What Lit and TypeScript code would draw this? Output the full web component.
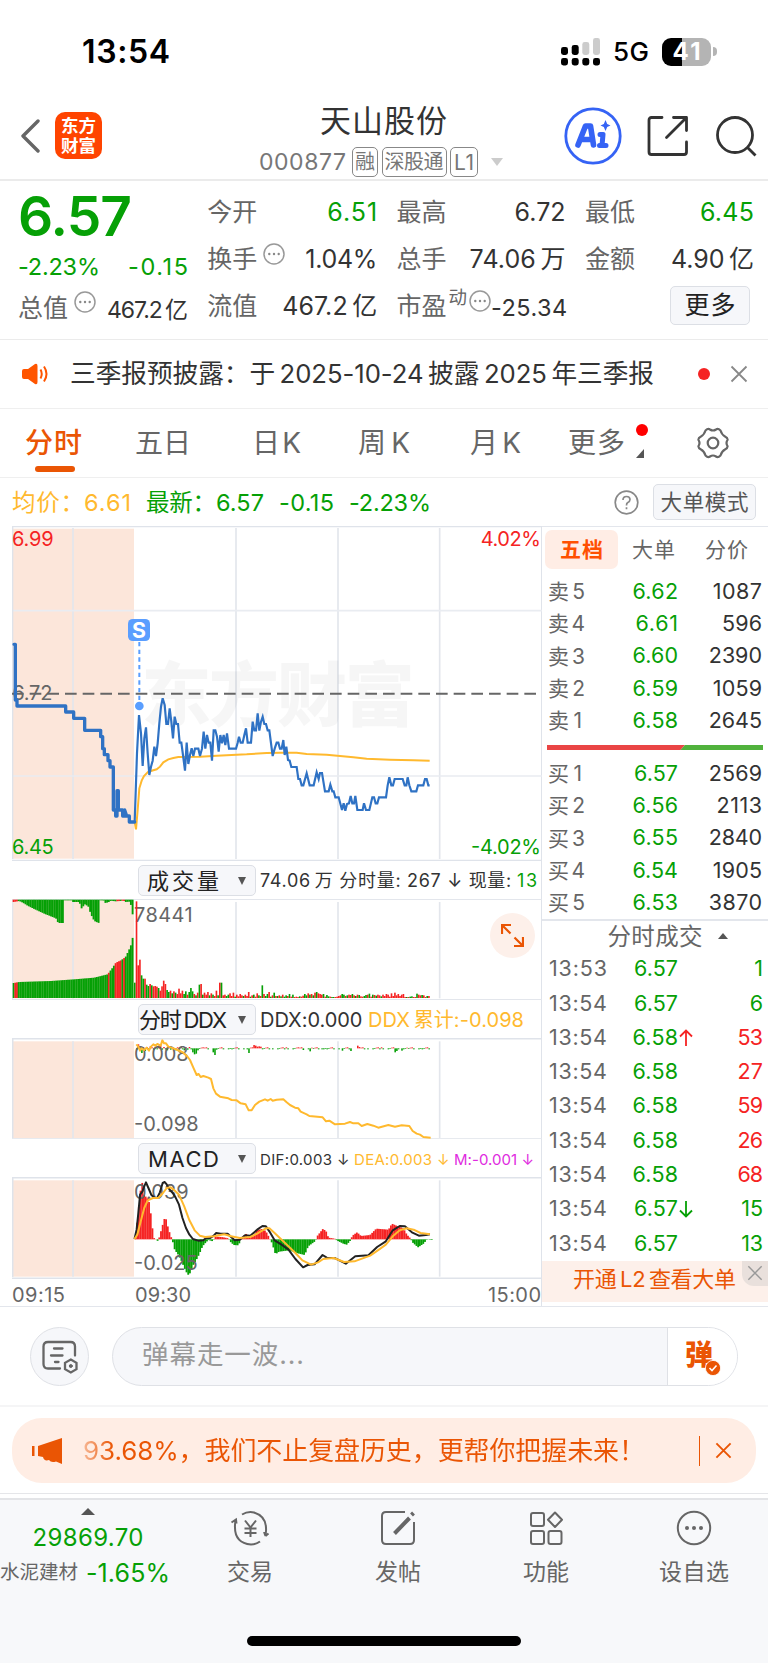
import { LitElement, html, svg, css } from "lit";
import { customElement, property } from "lit/decorators.js";

/** A single line of text whose tracking is adjusted so that it fills the given width. */
@customElement("fit-label")
class FitLabel extends LitElement {
  @property() text = "";
  @property({ type: Number }) w = 0;
  static styles = css`
    :host { display: inline-block; flex: none; white-space: pre; line-height: 1; }
    span { display: inline-block; }
  `;
  updated() {
    const s = this.renderRoot.querySelector("span") as HTMLElement;
    s.style.letterSpacing = "0px";
    const natural = s.getBoundingClientRect().width;
    const gaps = Math.max(1, [...this.text].length - 1);
    const ls = (this.w - natural) / gaps;
    s.style.letterSpacing = `${ls}px`;
    s.style.marginRight = `${-ls}px`;
  }
  render() { return html`<span>${this.text}</span>`; }
}

const t = (text: string, w: number, cls = "") =>
  html`<fit-label class=${cls} .text=${text} .w=${w}></fit-label>`;

const lerp = (pts: number[][], x: number) => {
  for (let i = 1; i < pts.length; i++) {
    if (x <= pts[i][0]) {
      const [x0, y0] = pts[i - 1], [x1, y1] = pts[i];
      return y0 + ((y1 - y0) * (x - x0)) / (x1 - x0 || 1);
    }
  }
  return pts[pts.length - 1][1];
};
const parse = (s: string) => s.trim().split(/\s+/).map((p) => p.split(",").map(Number));
const shift = (s: string, dx: number) => parse(s).map(([x, y]) => `${x + dx},${y}`).join(" ");
const stretch = (s: string) => parse(s).map(([x, y]) => `${(x * 3 / 2.877).toFixed(1)},${y}`).join(" ");

const PRE = "42,373 46,373 46,540 51,540 51,558 197,558 197,576 221,576 221,595 254,595 254,631 302,631 302,650 308,650 308,686 313,686 313,704 324,704 324,722 330,722 330,741 340,741 340,870 347,870 347,888 351,888 351,812 355,812 355,870 368,870 368,888 374,888 374,870 380,888 388,888 388,906 404,906";
const PRICE = "404,906 411,700 417,585 423,640 428,738 433,655 438,622 443,700 448,765 453,740 458,722 463,680 468,708 473,670 478,610 483,560 488,535 494,555 499,612 504,612 509,565 514,605 519,655 524,590 529,612 534,612 539,668 544,668 549,705 555,752 560,668 565,732 570,705 575,685 580,708 585,686 595,686 600,708 606,686 611,635 616,686 621,645 626,668 631,668 636,722 641,631 646,631 651,650 656,695 661,645 666,670 671,645 676,675 681,640 687,686 708,686 713,668 717,650 722,668 728,668 733,645 738,625 743,668 753,668 758,605 763,631 768,631 773,580 778,632 783,605 788,590 793,612 798,612 803,631 808,631 " +
  shift("8,708 14,686 20,668 25,668 30,686 35,686 40,660 44,705 49,680 54,720 59,722 64,741 80,741 85,777 90,777 95,796 100,796 110,760 119,796 131,796 140,757 146,777 150,759 156,759 165,814 176,814 181,794 187,814 191,814 196,832 206,832 216,870 221,850 226,872 231,852 237,850 242,828 247,850 252,850 256,828 262,870 278,870 282,850 288,870 298,870 307,832 312,832 317,850 322,850 327,832 348,832 353,796 358,772 364,796 369,796 374,777 398,777 404,796 409,796 413,772 418,796 424,814 439,814 444,796 460,796 465,777 470,777 475,796 479,796", 810);
const AVG = "404,906 408,928 413,870 418,805 425,782 432,768 445,755 470,748 480,740 490,727 505,718 520,714 535,711 600,710 650,707 740,703 800,699 840,698 890,698 920,702 980,704 1020,708 1060,712 1100,716 1170,719 1240,721 1289,722";
const DDX = "409,568 415,575 420,587 425,580 432,585 440,578 447,587 453,575 460,568 466,572 472,567 482,572 487,556 492,565 498,565 505,575 515,578 525,582 540,588 550,593 560,602 570,615 580,638 590,660 596,657 602,666 610,663 625,668 633,672 640,700 648,716 660,725 685,730 695,735 710,736 722,745 737,748 746,766 755,766 765,750 778,740 795,733 803,737 812,732 818,737 830,734 " +
  shift("40,733 50,742 60,750 75,758 85,760 92,770 110,778 118,783 158,787 168,799 178,797 195,808 225,806 240,801 250,805 265,805 275,813 292,807 310,812 325,818 355,810 375,815 395,811 418,813 428,828 440,836 450,839 460,846 482,848", 810);
const DIF = stretch("387,328 393,300 398,250 403,195 410,185 415,170 420,158 427,175 435,195 445,205 452,205 460,188 468,160 474,157 480,165 488,180 497,190 505,203 515,225 525,265 535,295 545,315 555,328 570,333 585,332 592,326 605,325 615,318 622,310 635,312 655,312 665,322 675,332 690,330 705,317 720,318 740,300 755,289 765,290 775,305 790,332 810,345 830,360 850,388 872,413 885,406 905,404 928,376 940,384 965,386 995,402 1022,380 1060,377 1085,352 1110,335 1130,302 1150,289 1165,290 1185,308 1205,318 1225,316 1237,314");
const DEA = stretch("387,328 395,315 405,275 415,235 425,212 440,205 455,205 465,195 480,175 490,173 500,180 515,195 530,230 545,272 560,302 575,318 590,322 615,320 645,314 665,320 690,325 720,322 740,312 765,296 775,296 790,310 820,340 850,370 870,392 895,405 915,398 930,388 960,385 990,397 1020,395 1065,378 1090,360 1110,345 1130,320 1150,302 1170,296 1190,300 1210,310 1237,314");
const MACD = parse("387,325 395,250 402,180 407,158 411,195 425,210 430,240 435,290 441,326 449,330 452,336 456,322 463,295 470,268 475,268 480,290 488,318 493,330 500,360 510,375 520,395 530,420 538,436 545,430 552,408 560,395 570,375 580,350 590,338 597,331 610,335 617,321 635,322 655,326 658,334 670,346 684,347 690,328 705,312 712,324 725,320 735,303 750,298 762,304 772,324 780,340 790,374 800,366 830,362 850,370 874,376 884,350 905,334 911,318 927,297 937,307 942,324 960,327 966,332 985,342 995,345 1006,332 1011,318 1025,308 1036,319 1062,316 1080,297 1115,300 1125,282 1142,290 1158,296 1168,315 1178,326 1184,338 1200,353 1216,342 1226,329 1240,331");

const GREEN = "#06a006", RED = "#f52323", GRID = "#e3e6ec";
const PITCH = 5.1;

const rect = (x: number, y0: number, y1: number, c: string, w = 5.1) =>
  svg`<rect x=${x.toFixed(1)} y=${Math.min(y0, y1).toFixed(1)} width=${w} height=${Math.abs(y1 - y0).toFixed(1)} fill=${c} />`;

/** Call-auction part of the volume pane: matched volume rises, unmatched hangs from the top. */
function auctionBars() {
  const up = [[38, 384], [55, 381], [150, 378], [220, 373], [280, 368], [320, 358], [333, 341], [345, 323], [360, 316], [374, 306], [384, 285], [392, 266], [396, 243]];
  const down = [[38, 141], [55, 138], [66, 143], [80, 152], [100, 162], [130, 176], [150, 184], [165, 190], [172, 204], [189, 204], [190, 136], [212, 136], [214, 141], [235, 141], [242, 160], [252, 148], [262, 154], [270, 178], [280, 198], [294, 204], [295, 136], [308, 136], [312, 144], [322, 142], [330, 137], [345, 139], [368, 137], [374, 141], [386, 140], [390, 150], [395, 178]];
  const out = [];
  for (let x = 38, i = 0; x < 396; x += PITCH, i++) {
    const red = (x > 40 && x < 52) || (x > 320 && x < 325) || (x > 341 && x < 362) || (x > 367 && x < 373);
    out.push(rect(x, lerp(up, x), 429, red ? RED : GREEN, 5.6));
    out.push(rect(x, 134, lerp(down, x), x < 52 || (x > 340 && x < 375 && i % 3) ? RED : GREEN, 5.6));
  }
  return out;
}

function volumeBars() {
  const head = "g46 r290 r98 r115 g68 g58 r58 g40 g36 r42 g38 r35 r36 r34 g30 r22 r35 r52 r42 g24 g18 r22 g14 r20 g16 r12 r28 r14 r22 g12 g20 r10 g18 g30 g20 r12 g8 r16 g40 r42 g10 r16 r10 r18 g8 r14 g10 r6 r22 g8 r46 g46 r8 r10 g6 g10 r14 r6 r16 g4 r10 r5 r12 r8 g6 r10 r6 r18 g4 r8 g10 r4 r14 g8 r6 g38 r12 g6 g12 r18 g4 r8 g16 r6 g6 r8 g5 r10 g4 g8 r6 g12 r4 g10".split(" ");
  const tail = "r3 r4 r3 g5 r4 r7 g12 g8 r14 g10 r12 g8 r16 g18 r14 r12 r10 g12 r4 g9 g5 r4 g3 g3 r3 r4 r6 r8 g12 g10 r6 g8 r10 r9 g12 r8 g6 r10 g9 r5 r4 g6 g9 r10 g13 r4 g10 r9 g7 r10 r8 g5 r10 r6 r12 r10 r4 r14 r6 r16 r8 r12 r6 r10 r12 r3 g3 r3 g4 g5 r3 r3 g13 r10 r8 g9 r8 r3 g6 r6 r3 r3 r3".split(" ");
  return [...head, ...tail].map((v, i) => {
    const x = 402 + i * PITCH;
    return x > 1288 ? null : rect(x, 429 - Number(v.slice(1)), 429, v[0] === "r" ? RED : GREEN, 4.9);
  });
}

function ddxBars() {
  const out = [];
  const peaks: Record<number, number> = { 1: -12, 3: 14, 5: 8, 8: -6, 13: -8, 14: -12, 33: 12, 34: 18, 35: 16, 36: 6, 45: 12, 46: 20, 47: 4, 66: 14, 69: -10, 70: -8, 71: -5, 72: -6, 73: -5, 98: 5, 102: 9, 109: 3, 121: 7, 126: 8, 130: -8, 131: -4, 152: 12, 153: 8, 156: 7 };
  for (let i = 0; i < 173; i++) {
    const h = peaks[i] ?? (i < 36 ? [4, -4, 3, 6, -3][i % 5] : [3, 0, -3, 2, 0, 3, -2][(i * 3 + (i >> 3)) % 7]);
    if (h) out.push(rect(408 + i * PITCH, 580, 580 + h, h < 0 ? RED : GREEN, 4.7));
  }
  return out;
}

function macdBars() {
  const out = [];
  for (let x = 387; x < 1240; x += 4.9) {
    const y = lerp(MACD, x);
    out.push(rect(x * 3 / 2.877, 329, y, y < 329 ? RED : GREEN, 5.5));
  }
  return out;
}

const verticals = (y0: number, y1: number) =>
  [219, 708, 1014, 1319].map((x) => svg`<path d="M${x} ${y0}V${y1}" stroke=${GRID} stroke-width="5" />`);

const ellipsis = (s: number) => html`<svg class="more-dot" width=${s} height=${s} viewBox="0 0 22 22" fill="none" stroke="#999" stroke-width="1.5">
  <circle cx="11" cy="11" r="10"/><g fill="#888" stroke="none"><circle cx="6.3" cy="11" r="1.2"/><circle cx="11" cy="11" r="1.2"/><circle cx="15.7" cy="11" r="1.2"/></g></svg>`;
const cross = (s: number, c: string, sw = 1.8) => html`<svg width=${s} height=${s} viewBox="0 0 18 18" fill="none" stroke=${c} stroke-width=${sw}><path d="M1.5 1.5L16.5 16.5M16.5 1.5L1.5 16.5"/></svg>`;

const ASKS = [["5", "6.62", "1087"], ["4", "6.61", "596"], ["3", "6.60", "2390"], ["2", "6.59", "1059"], ["1", "6.58", "2645"]];
const BIDS = [["1", "6.57", "2569"], ["2", "6.56", "2113"], ["3", "6.55", "2840"], ["4", "6.54", "1905"], ["5", "6.53", "3870"]];
const TRADES = [["13:53", "6.57", "", "1", "g"], ["13:54", "6.57", "", "6", "g"], ["13:54", "6.58", "↑", "53", "r"], ["13:54", "6.58", "", "27", "r"], ["13:54", "6.58", "", "59", "r"], ["13:54", "6.58", "", "26", "r"], ["13:54", "6.58", "", "68", "r"], ["13:54", "6.57", "↓", "15", "g"], ["13:54", "6.57", "", "13", "g"]];
const numW = (s: string) => [...s].reduce((a, c) => a + (c === "1" ? 9.4 : c === "." ? 6 : 13.3), 0);

@customElement("app-root")
class AppRoot extends LitElement {
  static styles = css`
    :host { display: block; width: 768px; height: 1663px; overflow: hidden; background: #fff; color: #333;
      font-family: Inter, "Noto Sans CJK SC", sans-serif; line-height: 1; }
    * { box-sizing: border-box; }
    svg { display: block; flex: none; }
    .row { display: flex; align-items: center; }
    .g { color: #06a006; } .r { color: #f52323; } .o { color: #ea5504; } .y { color: #ffb92e; } .m { color: #e02be0; } .gray { color: #666; }

    .status { height: 90px; padding: 13px 51px 0 82px; justify-content: space-between; color: #000; }
    .clock { font-size: 32px; font-weight: 600; }
    .radio { gap: 13px; font-size: 26px; font-weight: 500; }
    .battery { position: relative; display: flex; align-items: center; }
    .cell { width: 49px; height: 28px; border-radius: 9px; background: linear-gradient(90deg, #000 41%, #b4b4b4 41%); color: #fff; font-size: 24px; font-weight: 700; display: flex; align-items: center; justify-content: center; }
    .nub { width: 4px; height: 9px; border-radius: 0 4px 4px 0; background: #b4b4b4; margin-left: 2px; }

    .head { height: 91px; border-bottom: 2px solid #ebebeb; display: grid; grid-template-columns: 34px 225px 305px 83px 69px 52px; align-items: center; padding-top: 2px; }
    .back { padding: 0 0 0 20px; }
    .logo { width: 47px; height: 47px; margin: -1px 0 0 21px; border-radius: 10px; background: #ff4400; color: #fff; font-weight: 700; font-size: 17.5px; display: flex; flex-direction: column; align-items: center; justify-content: center; gap: 2px; }
    .name { display: flex; flex-direction: column; height: 88px; padding-top: 13px; }
    .title { font-size: 31px; margin-left: 61px; height: 33px; }
    .code { font-size: 23px; color: #777; height: 30px; margin-top: 9px; }
    .tag { border: 1.5px solid #888; border-radius: 5px; height: 30px; display: flex; align-items: center; justify-content: center; font-size: 20px; margin-right: 3.5px; color: #777; }
    .tag.a { width: 26px; margin-left: 6px; } .tag.b { width: 65px; } .tag.c { width: 28px; font-size: 21px; }
    .tri-d { width: 0; height: 0; border: 6.5px solid transparent; border-top: 8px solid #ccc; border-bottom: 0; }
    .code .tri-d { margin-left: 9px; }

    .quote { height: 159px; padding: 8px 13px 0 18px; display: grid; grid-template-columns: 170px 170px 169px 169px; column-gap: 19.3px; border-bottom: 1px solid #ebebeb; }
    .price { height: 54px; font-size: 55px; font-weight: 600; display: flex; align-items: center; }
    .chg { height: 47px; justify-content: space-between; font-size: 23.5px; }
    .cap { height: 36px; font-size: 23px; }
    .cap .more-dot { margin: -13px 11px 0 6px; }
    .cap .last { margin-top: 4px; }
    .lab { font-size: 25px; color: #666; }
    .stat { height: 47px; justify-content: space-between; font-size: 25px; }
    .stat .more-dot { margin: -11px auto 0 6px; }
    .stat.pe .lab + .dyn { font-size: 18.5px; color: #666; margin: -18px 2px 0 2px; }
    .stat.pe .more-dot { margin: -11px 0 0 0; }
    .pe .num { font-size: 23.5px; margin-top: 3px; }
    .btn { border: 1.5px solid #dcdfe5; border-radius: 5px; background: #f6f7fa; display: flex; align-items: center; }
    .morebtn { width: 80px; height: 39px; margin: 3px 4px 0 auto; justify-content: center; font-size: 25px; color: #222; }

    .notice { height: 68.5px; border-bottom: 1px solid #efefef; padding: 0 20px 0 22px; font-size: 25.7px; }
    .notice .txt { margin: 0 auto 0 21px; }
    .dot { width: 12px; height: 12px; border-radius: 50%; background: #f52323; flex: none; }
    .notice .dot { margin-right: 20px; }

    .tabs { height: 69px; border-bottom: 1px solid #efefef; font-size: 28px; color: #666; display: grid; grid-template-columns: 110px 117px 106px 112px 98px 129px 58px; padding: 1px 0 0 25px; align-items: center; }
    .tab { display: flex; position: relative; align-items: center; }
    .tab.on { color: #ea5504; font-weight: 500; }
    .tab.on::after { content: ""; position: absolute; left: 10px; top: 37px; width: 40px; height: 6px; border-radius: 3px; background: #ea5504; }
    .flag { display: flex; flex-direction: column; gap: 13px; margin: -4px 0 0 11px; }
    .flag .dot { background: #ff0000; }
    .corner { width: 0; height: 0; border-left: 8px solid transparent; border-bottom: 9px solid #555; }

    .avg { height: 48.5px; font-size: 23.5px; padding: 1px 0 0 12px; }
    .avg .gap { margin-left: 15px; }
    .avg svg { margin: 0 14px 0 auto; }
    .mode { width: 103px; height: 36px; margin-right: 12px; justify-content: center; font-size: 21.5px; color: #555; }

    .board { height: 781px; display: grid; grid-template-columns: 530px 226px; padding-left: 12px; border-bottom: 1.5px solid #e3e6ec; }
    .charts { border-right: 1.5px solid #dfe3ea; }
    svg text { font-family: Inter, "Noto Sans CJK SC", sans-serif; }
    .sub { height: 38px; padding: 1px 0 0 126px; }
    .sub fit-label { margin-top: 1px; }
    .sel { width: 118px; height: 31px; font-size: 22px; margin-right: 4px; justify-content: space-between; padding: 0 9px 0 8px; color: #222; }
    .sel.tight { padding-left: 0; }
    .sel.mid { padding-left: 9px; }
    .sel .tri-d { border-width: 8px 4.5px 0; border-top-color: #555; }
    .sub .v { font-size: 18px; } .sub .d { font-size: 20px; } .sub .k { font-size: 15px; }
    .plot { position: relative; }
    .zoom { position: absolute; left: 478px; top: 14px; width: 45px; height: 45px; border-radius: 50%; background: #fdf0ea; display: flex; align-items: center; justify-content: center; }
    .axis { height: 27px; font-size: 20px; color: #666; padding-top: 5px; }
    .axis .open { margin-left: 70px; }
    .axis .end { margin-left: auto; }

    .depth { border-top: 1.5px solid #e3e6ec; }
    .dtabs { height: 48.5px; font-size: 21px; padding: 0 0 3px 3px; color: #666; }
    .dtab { width: 73px; height: 39px; border-radius: 7px; background: #ffede5; color: #ff5000; font-weight: 700; display: flex; align-items: center; justify-content: center; margin-right: 14px; }
    .dtabs .last { margin-left: 30px; }
    .lvl { height: 32.3px; padding: 0 6px; font-size: 21.5px; display: grid; grid-template-columns: 38px 92px 1fr; align-items: center; }
    .lvl .num, .trade .num { justify-self: end; }
    .lvl .lab { font-size: 21px; }
    .ratio { height: 5px; margin: 8px 5px 7.3px 5px; }
    .subhead { height: 33px; border-top: 2px solid #e3e6ec; justify-content: center; gap: 15px; font-size: 23.5px; color: #666; padding-left: 25px; }
    .tri-u { width: 0; height: 0; border: 5px solid transparent; border-bottom: 6px solid #555; border-top: 0; }
    .trade { height: 34.33px; padding: 0 5px 0 7px; font-size: 21.5px; display: grid; grid-template-columns: 58px 71px 20px 1fr; align-items: center; }
    .l2 { position: relative; height: 41px; background: #fdf0ea; color: #ea5504; font-size: 22px; padding: 0 0 4px 31px; display: flex; align-items: center; }
    .l2x { position: absolute; right: 0; top: 0; width: 26px; height: 25px; background: #e9e0dc; border-radius: 0 0 0 12px; display: flex; align-items: center; justify-content: center; }

    .barrage { height: 98px; padding: 1px 30px 0 30px; gap: 23px; }
    .round { width: 59px; height: 59px; border-radius: 50%; border: 1.5px solid #dfe1e6; background: #f6f7fa; display: flex; align-items: center; justify-content: center; }
    .field { flex: 1; height: 59px; border: 1.5px solid #dfe1e6; border-radius: 30px; background: #f6f7fa; display: flex; overflow: hidden; }
    .ph { flex: 1; padding: 13px 0 0 29px; font-size: 26.5px; color: #999; }
    .dan { width: 70px; border-left: 1.5px solid #dfe1e6; background: #fff; color: #ea5504; font-weight: 900; font-size: 28px; padding: 13px 0 0 17px; position: relative; }
    .dan svg { position: absolute; left: 37px; top: 32px; }

    .adwrap { height: 89px; border-top: 2px solid #f5f5f6; border-bottom: 1.5px solid #e5e6e9; padding: 11px 12px 0 12px; }
    .ad { height: 65px; border-radius: 30px; background: #ffede4; color: #ea5504; font-size: 26px; padding: 0 24px 0 20px; }
    .ad .txt { margin-left: 21px; background: linear-gradient(90deg, #f7b896, #ea5504 30px); -webkit-background-clip: text; background-clip: text; color: transparent; }
    .bar { width: 1.5px; height: 30px; background: #ea5504; margin: 0 15px 0 auto; }

    .nav { height: 169px; margin-top: 4px; border-top: 2.5px solid #e3e4e7; background: #f7f8fa; display: grid; grid-template-columns: 176px repeat(4, 148px); grid-template-rows: 136px 10px; }
    .idx { display: flex; flex-direction: column; align-items: center; padding-top: 8px; font-size: 24px; }
    .idx .tri-u { border-left-width: 7px; border-right-width: 7px; border-bottom-width: 7px; }
    .idx .pt { margin-top: 11px; }
    .idx .row { width: 176px; height: 28px; margin-top: 9px; gap: 8px; font-size: 25px; }
    .idx .sector { font-size: 19.5px; color: #666; }
    .item { display: flex; flex-direction: column; align-items: center; padding-top: 10px; font-size: 23px; color: #666; }
    .item svg { margin-bottom: 15px; }
    .home { grid-column: 1 / -1; width: 274px; height: 10px; border-radius: 5px; background: #000; margin: 0 auto; align-self: end; }
  `;

  level(side: string, [n, p, v]: string[]) {
    return html`<div class="lvl">${t(`${side}\u2009${n}`, n === "1" ? 34 : 37, "lab")}${t(p, p === "6.61" ? 42.5 : p.endsWith("7") ? 44 : 45.5, "num g")}${t(v, numW(v), "num")}</div>`;
  }

  render() {
    return html`
      <div class="row status">
        ${t("13:54", 88, "clock")}
        <div class="row radio">
          <svg width="39" height="28" viewBox="0 0 39 28"><g fill="#000"><rect x="0" y="9" width="7" height="8" rx="2.4"/><rect x="10.7" y="7" width="7" height="10" rx="2.4"/><rect x="0" y="20" width="7" height="7.5" rx="2.4"/><rect x="10.7" y="20" width="7" height="7.5" rx="2.4"/><rect x="21.3" y="20" width="7" height="7.5" rx="2.4"/><rect x="32" y="20" width="7" height="7.5" rx="2.4"/></g><g fill="#ccc"><rect x="21.3" y="4" width="7" height="13" rx="2.4"/><rect x="32" y="0" width="7" height="17" rx="2.4"/></g></svg>
          ${t("5G", 36)}
          <div class="battery"><div class="cell">${t("41", 28)}</div><div class="nub"></div></div>
        </div>
      </div>

      <div class="head">
        <div class="back"><svg width="20" height="34" viewBox="0 0 20 34" fill="none" stroke="#666" stroke-width="3.4" stroke-linecap="round" stroke-linejoin="round"><path d="M18 2L3 17L18 32"/></svg></div>
        <div class="logo">${t("东方", 35)}${t("财富", 35)}</div>
        <div class="name">
          <div class="title">${t("天山股份", 127)}</div>
          <div class="row code">${t("000877", 87)}<div class="tag a">融</div><div class="tag b">${t("深股通", 59)}</div><div class="tag c">${t("L1", 20)}</div><div class="tri-d"></div></div>
        </div>
        <svg width="58" height="58" viewBox="0 0 58 58"><circle cx="29" cy="29" r="27.2" fill="none" stroke="#3563f5" stroke-width="2.8"/><path d="M14 38L21.5 19H26.5L29.5 38M17 32.5H28" fill="none" stroke="#3563f5" stroke-width="5.6" stroke-linejoin="round" stroke-linecap="round"/><path d="M39 27.5L38 38.500M36 27.500H39M35.500 38.500H42" fill="none" stroke="#3563f5" stroke-width="5" stroke-linecap="round"/><path d="M41.5 13L43.2 17L46.5 18.5L43.2 20L41.5 24L39.8 20L36.5 18.5L39.8 17Z" fill="#3563f5"/></svg>
        <svg width="42" height="42" viewBox="0 0 42 42" fill="none" stroke="#333" stroke-width="2.8" stroke-linecap="round" stroke-linejoin="round"><path d="M15 2.500H4.500Q2 2.500 2 5V37Q2 39.500 4.500 39.500H37Q39.500 39.500 39.500 37V27M26.500 2.500H39.500V15.500M38.500 3.500L19.500 22.500"/></svg>
        <svg width="42" height="42" viewBox="0 0 42 42" fill="none" stroke="#333" stroke-width="2.8"><circle cx="19" cy="20" r="17.5"/><path d="M31.500 32.500L39.500 40.500"/></svg>
      </div>

      <div class="quote">
        <div>
          <div class="price g">${t("6.57", 114)}</div>
          <div class="row chg g">${t("-2.23%", 82)}${t("-0.15", 60)}</div>
          <div class="row cap">${t("总值", 50, "lab")}${ellipsis(22)}${t("467.2\u2009亿", 81, "last")}</div>
        </div>
        <div>
          <div class="row stat">${t("今开", 50, "lab")}${t("6.51", 50, "g")}</div>
          <div class="row stat">${t("换手", 50, "lab")}${ellipsis(22)}${t("1.04%", 72)}</div>
          <div class="row stat">${t("流值", 50, "lab")}${t("467.2\u2009亿", 95)}</div>
        </div>
        <div>
          <div class="row stat">${t("最高", 50, "lab")}${t("6.72", 51)}</div>
          <div class="row stat">${t("总手", 50, "lab")}${t("74.06\u2009万", 96)}</div>
          <div class="row stat pe">${t("市盈", 50, "lab")}<span class="dyn">动</span>${ellipsis(22)}${t("-25.34", 76, "num")}</div>
        </div>
        <div>
          <div class="row stat">${t("最低", 50, "lab")}${t("6.45", 54, "g")}</div>
          <div class="row stat">${t("金额", 50, "lab")}${t("4.90\u2009亿", 83)}</div>
          <div class="btn morebtn">${t("更多", 51)}</div>
        </div>
      </div>

      <div class="row notice">
        <svg width="27" height="22" viewBox="0 0 27 22"><path d="M0 8Q0 6 2 6H6L13 1Q15.500 0 15.500 3V19Q15.500 22 13 21L6 16H2Q0 16 0 14Z" fill="#ff5500"/><path d="M18.500 6.500Q21 11 18.500 15.500M22 3.500Q27 11 22 18.500" fill="none" stroke="#ff5500" stroke-width="2"/></svg>
        <div class="row txt">${t("三季报预披露：于\u20092025-10-24\u2009披露\u20092025\u2009年三季报", 584)}</div>
        <div class="dot"></div>${cross(18, "#888")}
      </div>

      <div class="tabs">
        <div class="tab on">${t("分时", 57)}</div><div class="tab">${t("五日", 56)}</div><div class="tab">${t("日\u2009K", 49)}</div><div class="tab">${t("周\u2009K", 52)}</div><div class="tab">${t("月\u2009K", 51)}</div>
        <div class="tab">${t("更多", 57)}<div class="flag"><div class="dot"></div><div class="corner"></div></div></div>
        <svg width="32" height="32" viewBox="0 0 32 32" fill="none" stroke="#666" stroke-width="2.2" stroke-linejoin="round"><path d="M8.500 3.500Q11 1 13 2.500Q16 4.500 19 2.500Q21 1 23.500 3.500Q25 8 28 9.500Q31 11 30.500 13Q28.500 16 30.500 19Q31 21 28 22.500Q25 24 23.500 28.500Q21 31 19 29.500Q16 27.500 13 29.500Q11 31 8.500 28.500Q7 24 4 22.500Q1 21 1.500 19Q3.500 16 1.500 13Q1 11 4 9.500Q7 8 8.500 3.500Z"/><circle cx="16" cy="16" r="5.300"/></svg>
      </div>

      <div class="row avg">
        ${t("均价：", 72, "y")}${t("6.61", 47, "y")}<span class="gap"></span>${t("最新：", 70, "g")}${t("6.57", 48, "g")}<span class="gap"></span>${t("-0.15", 55, "g")}<span class="gap"></span>${t("-2.23%", 82, "g")}
        <svg width="25" height="25" viewBox="0 0 25 25" fill="none" stroke="#888" stroke-width="1.7"><circle cx="12.500" cy="12.500" r="11.300"/><path d="M9 10Q9 6.500 12.500 6.500Q16 6.500 16 9.500Q16 11.500 13.500 12.800Q12.500 13.500 12.500 15.500M12.500 17.300V19.300"/></svg>
        <div class="btn mode">${t("大单模式", 88)}</div>
      </div>

      <div class="board">
        <div class="charts">
          <svg width="530" height="335" viewBox="36 18 1590 1005" fill="none">
            <rect x="36" y="26" width="366" height="990" fill="#fce6da"/>
            ${verticals(24, 1017)}
            <path d="M36 272H1626M36 768H1626" stroke="#e9ecf1" stroke-width="5"/>
            <path d="M36 20H1626M36 1021H1626M38 20V1017" stroke="#dfe3ea" stroke-width="4"/>
            <text x="424" y="602" font-size="210" font-weight="900" textLength="820" fill="#000" fill-opacity=".035">东方财富</text>
            <text x="37" y="540" font-size="60" textLength="120" fill="#666">6.72</text>
            <path d="M36 521H1626" stroke="#666" stroke-width="6" stroke-dasharray="35 18"/>
            <polyline points=${AVG} stroke="#ffb92e" stroke-width="6"/>
            <polyline points=${PRE} stroke="#2f72c4" stroke-width="10" stroke-linejoin="round" stroke-linecap="round"/>
            <polyline points=${PRICE} stroke="#2f72c4" stroke-width="6.500"/>
            <text x="36" y="77" font-size="60" textLength="125" fill="#f52323">6.99</text>
            <text x="36" y="1001" font-size="60" textLength="125" fill="#06a006">6.45</text>
            <text x="1442" y="77" font-size="60" textLength="181" fill="#f52323">4.02%</text>
            <text x="1413" y="1001" font-size="60" textLength="210" fill="#06a006">-4.02%</text>
            <path d="M418 366V548" stroke="#5a9eff" stroke-width="6" stroke-dasharray="13 10"/>
            <circle cx="418" cy="558" r="13" fill="#5a9eff"/>
            <rect x="384" y="297" width="66" height="66" rx="14" fill="#5a9eff"/>
            <text x="417" y="353" font-size="64" font-weight="700" text-anchor="middle" fill="#fff">S</text>
          </svg>

          <div class="row sub"><div class="btn sel">${t("成交量", 72)}<div class="tri-d"></div></div><div class="v">${t("74.06\u2009万 分时量: 267 ↓ 现量: ", 257)}</div><div class="v">${t("13", 20, "g")}</div></div>
          <div class="plot">
            <svg width="530" height="101" viewBox="36 132 1590 303" fill="none">
              <rect x="36" y="134" width="366" height="296" fill="#fce6da"/>
              ${verticals(141, 430)}
              <path d="M36 133H1626M36 434H1626M38 133V434" stroke="#e3e6ec" stroke-width="4"/>
              <text x="402" y="200" font-size="60" textLength="176" fill="#666">78441</text>
              ${auctionBars()}${volumeBars()}
            </svg>
            <div class="zoom"><svg width="23" height="23" viewBox="0 0 23 23" fill="none" stroke="#ea5504" stroke-width="2.200"><path d="M1 10V1H10M1 1L9.500 9.500M22 13V22H13M22 22L13.500 13.500"/></svg></div>
          </div>

          <div class="row sub"><div class="btn sel tight">${t("分时\u2009DDX", 88)}<div class="tri-d"></div></div><div class="row d">${t("DDX:0.000 ", 108)}${t("DDX\u2009累计:-0.098", 156, "y")}</div></div>
          <svg width="530" height="101" viewBox="36 549 1590 303" fill="none">
            <rect x="36" y="559" width="366" height="290" fill="#fce6da"/>
            ${verticals(559, 849)}
            <path d="M36 551H1626M38 551V850" stroke="#dfe3ea" stroke-width="5"/><path d="M36 851H1626" stroke="#e3e6ec" stroke-width="3"/>
            ${ddxBars()}
            <text x="402" y="617" font-size="60" textLength="164" fill="#666">0.008</text>
            <text x="402" y="829" font-size="60" textLength="194" fill="#666">-0.098</text>
            <polyline points=${DDX} stroke="#ffb92e" stroke-width="6" stroke-linejoin="round"/>
          </svg>

          <div class="row sub"><div class="btn sel mid">${t("MACD", 71)}<div class="tri-d"></div></div><div class="row k">${t("DIF:0.003 ↓ ", 94)}${t("DEA:0.003 ↓ ", 100, "y")}${t("M:-0.001 ↓", 80, "m")}</div></div>
          <svg width="530" height="102" viewBox="36 142 1590 306" fill="none">
            <rect x="36" y="152" width="366" height="289" fill="#fce6da"/>
            ${verticals(152, 441)}
            <path d="M36 144H1626M36 446H1626M38 144V442" stroke="#dfe3ea" stroke-width="5"/>
            ${macdBars()}
            <text x="402" y="209" font-size="60" textLength="164" fill="#666">0.039</text>
            <polyline points=${DIF} stroke="#222" stroke-width="6" stroke-linejoin="round"/>
            <polyline points=${DEA} stroke="#ffb92e" stroke-width="6" stroke-linejoin="round"/>
            <text x="402" y="421" font-size="60" textLength="191" fill="#666">-0.025</text>
          </svg>
          <div class="row axis">${t("09:15", 53)}${t("09:30", 56, "open")}${t("15:00", 53, "end")}</div>
        </div>

        <div class="depth">
          <div class="row dtabs"><div class="dtab">${t("五档", 43)}</div>${t("大单", 43)}${t("分价", 43, "last")}</div>
          ${ASKS.map((r) => this.level("卖", r))}
          <svg class="ratio" width="216" height="5" viewBox="0 0 216 5"><path d="M0 0H138L133.500 5H0Z" fill="#ea4545"/><path d="M138 0H216V5H133.500Z" fill="#50b23c"/></svg>
          ${BIDS.map((r) => this.level("买", r))}
          <div class="row subhead">${t("分时成交", 95)}<div class="tri-u"></div></div>
          ${TRADES.map(([h, p, a, v, c]) => html`<div class="trade">${t(h, 58, "gray")}${t(p, p.endsWith("7") ? 44 : 45.5, "num g")}<svg width="16" height="18" viewBox="0 0 16 18" fill="none" stroke-width="1.800" stroke=${c === "r" ? RED : GREEN}>${a === "↑" ? svg`<path d="M8 17V1.500M2 7.500L8 1.500L14 7.500"/>` : a ? svg`<path d="M8 1V16.500M2 10.500L8 16.500L14 10.500"/>` : null}</svg>${t(v, numW(v) - (v.length > 1 ? 1 : 0), "num " + c)}</div>`)}
          <div class="l2">${t("开通\u2009L2\u2009查看大单", 163)}<div class="l2x">${cross(16, "#999", 1.6)}</div></div>
        </div>
      </div>

      <div class="row barrage">
        <div class="round"><svg width="38" height="35" viewBox="0 0 38 35" fill="none" stroke="#666" stroke-width="2.300" stroke-linecap="round"><path d="M19 29.500H7Q2.500 29.500 2.500 25V7.500Q2.500 3 7 3H29.500Q34 3 34 7.500V16.500M13 9.500H21.500M10 16.500H21.500M14 23H17.500"/><path d="M29.800 20.500L35.500 23.800V30.200L29.800 33.500L24 30.200V23.800Z"/><circle cx="29.800" cy="27" r="1.500" fill="#666" stroke-width="1"/></svg></div>
        <div class="field"><div class="ph">${t("弹幕走一波...", 162)}</div><div class="dan">弹<svg width="16" height="16" viewBox="0 0 16 16"><circle cx="8" cy="8" r="7.600" fill="#ea5504" stroke="#fff" stroke-width=".8"/><path d="M4.500 8L7 10.500L11.500 5.500" fill="none" stroke="#fff" stroke-width="1.600"/></svg></div></div>
      </div>

      <div class="adwrap"><div class="row ad">
        <svg width="30" height="26" viewBox="0 0 30 26" fill="#ea5504"><path d="M0 8H2.500V18H0ZM6 8L30 0V26L24 23.500Q19 25 17 22Q12 23.500 11 19L6 18Z"/></svg>
        <div class="txt">${t("93.68%，我们不止复盘历史，更帮你把握未来！", 562)}</div>
        <div class="bar"></div>${cross(17, "#ea5504", 2)}
      </div></div>

      <div class="nav">
        <div class="idx"><div class="tri-u"></div><div class="pt g">${t("29869.70", 111)}</div><div class="row">${t("水泥建材", 78, "sector")}${t("-1.65%", 84, "g")}</div></div>
        <div class="item"><svg width="40" height="36" viewBox="0 0 40 36" fill="none" stroke="#666" stroke-width="2"><path d="M12 4.500Q18 1 24 2.500Q37 6.500 36 21L35.500 26M35.500 26L38.500 23.500M35.500 26L34 22M30 31.500Q26 34.500 21 34.500Q4 33 5 15L5.500 9.500M1.500 12.500L6 9.500L6.500 13.500M15 10.500L20.500 17.500L26 10.500M20.500 17.500V27M14.500 18.500H26.500M14.500 23H26.500"/></svg>${t("交易", 46)}</div>
        <div class="item"><svg width="36" height="36" viewBox="0 0 36 36" fill="none" stroke="#666" stroke-width="2"><path d="M25 2H6Q2 2 2 6V30Q2 34 6 34H30Q34 34 34 30V12"/><path d="M29.500 8L14.500 23.500M31.500 5L33.500 3" stroke-width="4"/></svg>${t("发帖", 46)}</div>
        <div class="item"><svg width="34" height="36" viewBox="0 0 34 36" fill="none" stroke="#666" stroke-width="2"><rect x="2" y="3" width="13" height="13" rx="2"/><rect x="2" y="21" width="13" height="13" rx="2"/><rect x="19.500" y="21" width="13" height="13" rx="2"/><path d="M26 2.500L33 9.800L26 17L19 9.800Z" stroke-linejoin="round"/></svg>${t("功能", 46)}</div>
        <div class="item"><svg width="36" height="36" viewBox="0 0 36 36" fill="none" stroke="#666" stroke-width="2"><circle cx="18" cy="18" r="16.200"/><g fill="#666" stroke="none"><circle cx="11" cy="18" r="2"/><circle cx="18" cy="18" r="2"/><circle cx="25" cy="18" r="2"/></g></svg>${t("设自选", 70)}</div>
        <div class="home"></div>
      </div>
    `;
  }
}
